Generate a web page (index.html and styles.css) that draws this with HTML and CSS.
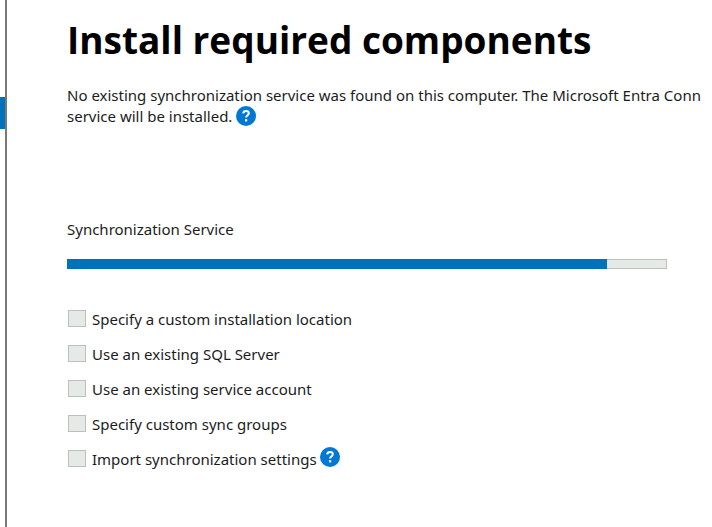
FILE: index.html
```html
<!DOCTYPE html>
<html lang="en">
<head>
<meta charset="utf-8">
<title>Install required components</title>
<link rel="stylesheet" href="styles.css">
</head>
<body>
<div class="window">
  <aside class="rail"><div class="rail-current"></div></aside>
  <main class="page">
    <h1>Install required components</h1>
    <p class="intro">No existing synchronization service was found on this computer. The Microsoft Entra Conn<br>service will be installed. <button class="help" type="button" aria-label="Help"><svg viewBox="0 0 20 20" aria-hidden="true"><circle cx="10" cy="10" r="10"/><path d="M7.2 7.4C7.3 5.7 8.4 4.9 10 4.9c1.7 0 2.8.9 2.8 2.3 0 2-2.7 2-2.7 4.4"/><rect x="9" y="13.2" width="2.2" height="2.2"/></svg></button></p>
    <section class="status">
      <label for="progress">Synchronization Service</label>
      <progress id="progress" max="100" value="90"></progress>
    </section>
    <ul class="options">
      <li><input type="checkbox" id="location"><label for="location">Specify a custom installation location</label></li>
      <li><input type="checkbox" id="sql"><label for="sql">Use an existing SQL Server</label></li>
      <li><input type="checkbox" id="account"><label for="account">Use an existing service account</label></li>
      <li><input type="checkbox" id="groups"><label for="groups">Specify custom sync groups</label></li>
      <li><input type="checkbox" id="import"><label for="import">Import synchronization settings</label><button class="help" type="button" aria-label="Help"><svg viewBox="0 0 20 20" aria-hidden="true"><circle cx="10" cy="10" r="10"/><path d="M7.2 7.4C7.3 5.7 8.4 4.9 10 4.9c1.7 0 2.8.9 2.8 2.3 0 2-2.7 2-2.7 4.4"/><rect x="9" y="13.2" width="2.2" height="2.2"/></svg></button></li>
    </ul>
  </main>
</div>
</body>
</html>
```
FILE: styles.css
```css
* { box-sizing: border-box; }

body {
  margin: 0;
  background: #fff;
  color: #1c1c1c;
  font: 15px/21px "Noto Sans", sans-serif;
  overflow: hidden;
}

.window {
  display: flex;
  min-height: 100vh;
}

.rail {
  flex: 0 0 7px;
  padding-top: 97px;
  border-right: 2px solid #777;
}

.rail-current {
  height: 32px;
  background: #0072bc;
}

.page {
  flex: 1;
  min-width: 0;
  padding: 12px 45px 0 60px;
}

h1 {
  margin: 0;
  color: #000;
  font-family: "Open Sans", "Noto Sans", sans-serif;
  font-size: 37px;
  line-height: 56px;
  white-space: nowrap;
}

.intro {
  margin: 17px 0 0;
  white-space: nowrap;
}

.help {
  width: 20px;
  height: 20px;
  padding: 0;
  border: 0;
  background: none;
  vertical-align: -4px;
}

.help svg {
  display: block;
  fill: none;
  stroke: #fff;
  stroke-width: 2;
}

.help circle {
  fill: #0078d4;
  stroke: none;
}

.help rect {
  fill: #fff;
  stroke: none;
}

.status {
  margin-top: 92px;
}

.status label {
  display: block;
}

progress {
  display: block;
  appearance: none;
  width: 100%;
  max-width: 600px;
  height: 10px;
  margin-top: 19px;
  border: 0;
}

progress::-webkit-progress-bar {
  background: #e5eae6;
  box-shadow: inset 0 0 0 1px #bcc0bd;
}

progress::-webkit-progress-value {
  background: #0072bc;
}

.options {
  display: grid;
  grid-auto-rows: 35px;
  margin: 33px 0 0;
  padding: 0;
  list-style: none;
}

.options li {
  display: flex;
  align-items: center;
}

.options input {
  appearance: none;
  width: 18px;
  height: 17px;
  margin: 0 6px 2px 1px;
  border: 1px solid #bcc0bd;
  background: #e5eae6;
}

.options .help {
  margin: 0 0 6px 3px;
}
```
